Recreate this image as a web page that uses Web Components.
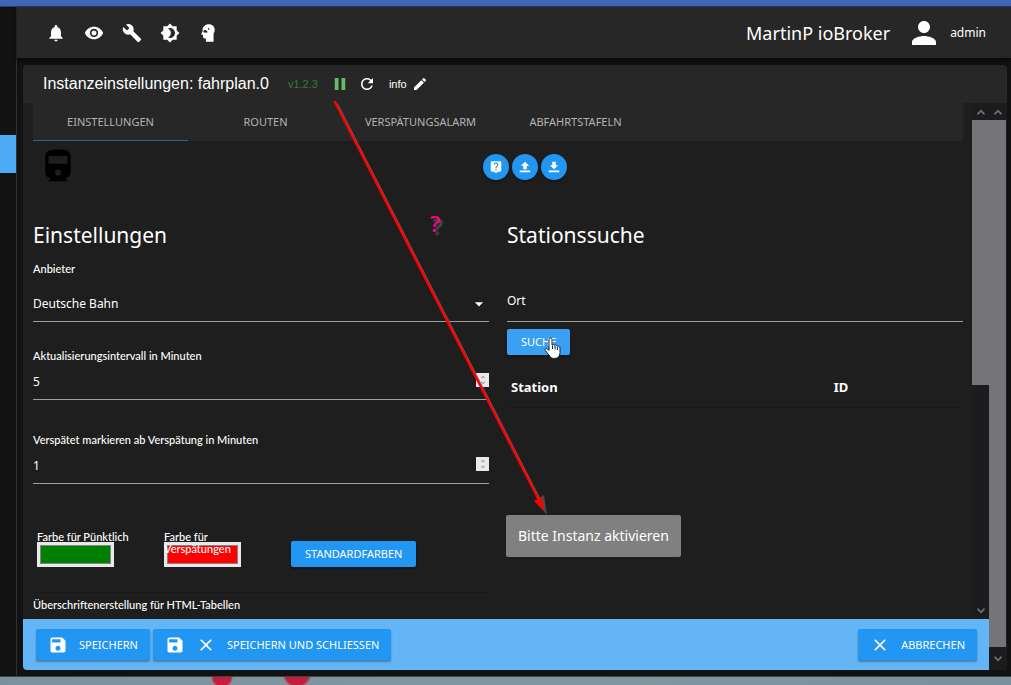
<!DOCTYPE html>
<html lang="de">
<head>
<meta charset="utf-8">
<title>ioBroker – Instanzeinstellungen</title>
<style>
  html, body { margin: 0; height: 100%; background: #121212; overflow: hidden; }
  body { font-family: "Noto Sans", "Open Sans", sans-serif; color: #fff; --narrow: Lato, "Noto Sans", sans-serif; }
</style>
</head>
<body>
<iob-app></iob-app>

<script>
const ICONS = {
  bell: '<path d="M12 22c1.1 0 2-.9 2-2h-4c0 1.1.89 2 2 2zm6-6v-5c0-3.07-1.64-5.64-4.5-6.32V4c0-.83-.67-1.5-1.5-1.5s-1.5.67-1.5 1.5v.68C7.63 5.36 6 7.92 6 11v5l-2 2v1h16v-1l-2-2z"/>',
  eye: '<path d="M12 4.5C7 4.5 2.73 7.61 1 12c1.73 4.39 6 7.5 11 7.5s9.27-3.11 11-7.5c-1.73-4.39-6-7.5-11-7.5zM12 17c-2.76 0-5-2.24-5-5s2.24-5 5-5 5 2.24 5 5-2.24 5-5 5zm0-8c-1.66 0-3 1.34-3 3s1.34 3 3 3 3-1.34 3-3-1.34-3-3-3z"/>',
  wrench: '<path d="M22.7 19l-9.1-9.1c.9-2.3.4-5-1.5-6.9-2-2-5-2.4-7.4-1.3L9 6 6 9 1.6 4.7C.4 7.1.9 10.1 2.9 12.1c1.9 1.9 4.6 2.4 6.9 1.5l9.1 9.1c.4.4 1 .4 1.4 0l2.3-2.3c.5-.4.5-1.1.1-1.4z"/>',
  theme: '<path d="M20 8.69V4h-4.69L12 .69 8.69 4H4v4.69L.69 12 4 15.31V20h4.69L12 23.31 15.31 20H20v-4.69L23.31 12 20 8.69zM12 18c-.89 0-1.74-.2-2.5-.55C11.56 16.5 13 14.42 13 12s-1.44-4.5-3.5-5.45C10.26 6.2 11.11 6 12 6c3.31 0 6 2.69 6 6s-2.69 6-6 6z"/>',
  head: '<path fill-rule="evenodd" d="M13 1.5c4.200 0 7 2.800 7 7 0 2-.6 3.200-1.300 4.500V22.500H9.500v-4H8c-1.100 0-2-.9-2-2v-2.500H4.500c-.5 0-.8-.5-.5-.9L5.500 10V8.500c0-4 3-7 7.500-7zM8 8.500l-1.500.8v1.600l1.500.9 1.500-.3 1.600.1.200-1.600-1.300-.6-.5-.9zM12.500 6l-.8.8.4 1.100 1.100.1.6-.9-.3-.9z"/>',
  pause: '<path d="M5 4h5v16H5zm9 0h5v16h-5z"/>',
  refresh: '<path d="M17.650 6.350C16.200 4.900 14.210 4 12 4c-4.420 0-7.990 3.580-7.990 8s3.570 8 7.990 8c3.730 0 6.840-2.550 7.730-6h-2.080c-.820 2.330-3.040 4-5.650 4-3.310 0-6-2.690-6-6s2.690-6 6-6c1.660 0 3.140.690 4.220 1.780L13 11h7V4l-2.350 2.350z"/>',
  pencil: '<path d="M3 17.250V21h3.750L17.810 9.940l-3.750-3.750L3 17.250zM20.710 7.040c.390-.390.390-1.020 0-1.410l-2.340-2.340c-.390-.390-1.020-.390-1.410 0l-1.830 1.830 3.750 3.750 1.830-1.830z"/>',
  person: '<path d="M12 12c2.210 0 4-1.790 4-4s-1.790-4-4-4-4 1.790-4 4 1.790 4 4 4zm0 2c-2.670 0-8 1.340-8 4v2h16v-2c0-2.660-5.330-4-8-4z"/>',
  train: '<path fill-rule="evenodd" d="M12 1C8 1 4 1.500 4 5v10.500C4 17.430 5.570 19 7.500 19L6 20.500v.5h12v-.5L16.500 19c1.930 0 3.500-1.570 3.500-3.500V5c0-3.500-3.580-4-8-4zM12 17.500c-1.100 0-2-.9-2-2s.9-2 2-2 2 .9 2 2-.9 2-2 2zM18 10H6V5h12z"/>',
  help: '<path d="M19 2H5c-1.110 0-2 .9-2 2v14c0 1.100.890 2 2 2h4l3 3 3-3h4c1.100 0 2-.9 2-2V4c0-1.100-.9-2-2-2zm-6 16h-2v-2h2v2zm2.070-7.750l-.9.920C13.450 11.900 13 12.500 13 14h-2v-.5c0-1.100.450-2.100 1.170-2.830l1.240-1.260c.370-.360.590-.860.590-1.410 0-1.100-.9-2-2-2s-2 .9-2 2H8c0-2.210 1.790-4 4-4s4 1.790 4 4c0 .880-.360 1.680-.930 2.250z"/>',
  upload: '<path d="M9 16h6v-6h4l-7-7-7 7h4zm-6 2h18v3H3z"/>',
  download: '<path d="M19 9h-4V3H9v6H5l7 7 7-7zM3 18v3h18v-3H3z"/>',
  save: '<path d="M17 3H5c-1.110 0-2 .9-2 2v14c0 1.100.890 2 2 2h14c1.100 0 2-.9 2-2V7l-4-4zm-5 16c-1.660 0-3-1.340-3-3s1.340-3 3-3 3 1.340 3 3-1.340 3-3 3zm3-10H5V5h10v4z"/>',
  close: '<path d="M19 6.410L17.590 5 12 10.590 6.410 5 5 6.410 10.590 12 5 17.590 6.410 19 12 13.410 17.590 19 19 17.590 13.410 12z"/>',
  caret: '<path d="M7 10l5 5 5-5z"/>',
  up: '<path d="M4 15l8-8 8 8-2 3-6-6-6 6z"/>',
  down: '<path d="M4 9l8 8 8-8-2-3-6 6-6-6z"/>'
};

/* Registers an element whose shadow root is cloned from a template. */
function define(name, html, setup) {
  const template = document.createElement('template');
  template.innerHTML = html;
  customElements.define(name, class extends HTMLElement {
    constructor() {
      super();
      this.attachShadow({ mode: 'open' }).append(template.content.cloneNode(true));
    }
    connectedCallback() {
      if (setup) setup(this, this.shadowRoot);
    }
  });
}

define('iob-icon', `
  <style>
    :host { display: inline-flex; flex: none; width: 20px; height: 20px; }
    svg { width: 100%; height: 100%; fill: currentColor; }
  </style>
  <svg viewBox="0 0 24 24" aria-hidden="true"></svg>`,
  (el, root) => { root.querySelector('svg').innerHTML = ICONS[el.getAttribute('name')] || ''; });

define('iob-icon-button', `
  <style>
    :host { display: inline-flex; }
    button { display: flex; align-items: center; justify-content: center; padding: 0; border: 0;
      width: var(--hit, 38px); height: var(--hit, 38px); background: none; color: inherit; }
    iob-icon { width: var(--glyph, 20px); height: var(--glyph, 20px); }
    :host([round]) button { width: 26px; height: 26px; border-radius: 50%; background: #2196f3;
      box-shadow: 0 2px 2px rgba(0,0,0,.3); }
    :host([round]) iob-icon { width: 14px; height: 14px; }
  </style>
  <button type="button"><iob-icon></iob-icon></button>`,
  (el, root) => {
    root.querySelector('iob-icon').setAttribute('name', el.getAttribute('icon'));
    root.querySelector('iob-icon').connectedCallback();
    root.querySelector('button').setAttribute('aria-label', el.getAttribute('label'));
  });

define('iob-button', `
  <style>
    :host { display: inline-flex; }
    button { display: flex; align-items: center; gap: 11px; height: 26px; padding: 0 14px; border: 0;
      border-radius: 2px; background: var(--fill, #2196f3); color: #fff; font: inherit; font-size: 11px;
      line-height: 16px; text-transform: uppercase; white-space: nowrap;
      box-shadow: 0 2px 2px rgba(0,0,0,.3); }
    :host([large]) button { height: 31px; padding: 0 12px; }
  </style>
  <button type="button"><slot name="icon"></slot><slot></slot></button>`);

define('iob-top-bar', `
  <style>
    :host { display: flex; align-items: center; justify-content: space-between; height: 51px;
      padding: 0 25px 0 20px; background: #272727; box-shadow: 0 2px 4px #080808; position: relative; }
    nav, .user { display: flex; align-items: center; }
    h1 { margin: 0 16px 0 0; font-size: 18px; font-weight: 400; line-height: 24px; }
    .user iob-icon { width: 36px; height: 36px; margin-right: 8px; }
    .user span { font-size: 12px; line-height: 20px; }
  </style>
  <nav>
    <iob-icon-button icon="bell" label="Benachrichtigungen"></iob-icon-button>
    <iob-icon-button icon="eye" label="Ansicht"></iob-icon-button>
    <iob-icon-button icon="wrench" label="Einstellungen"></iob-icon-button>
    <iob-icon-button icon="theme" label="Farbschema"></iob-icon-button>
    <iob-icon-button icon="head" label="Expertenmodus"></iob-icon-button>
  </nav>
  <div class="user"><h1>MartinP ioBroker</h1><iob-icon name="person"></iob-icon><span>admin</span></div>`);

define('iob-card-header', `
  <style>
    :host { display: flex; align-items: center; height: 38px; padding-left: 20px; background: #272727;
      border-radius: 4px 4px 0 0; font-family: "Liberation Sans", Arial, sans-serif; font-size: 11px;
      --hit: 27px; --glyph: 18px; }
    h2 { margin: 0 19px 0 0; font-size: 16px; font-weight: 400; line-height: 36px; }
    .version { margin-right: 9px; color: #2e7d32; }
    .run { color: #66bb6a; }
    .info { margin: 0 0 0 8px; }
    .edit { --glyph: 16px; }
  </style>
  <h2>Instanzeinstellungen: fahrplan.0</h2>
  <span class="version">v1.2.3</span>
  <iob-icon-button class="run" icon="pause" label="Anhalten"></iob-icon-button>
  <iob-icon-button icon="refresh" label="Neu starten"></iob-icon-button>
  <span class="info">info</span>
  <iob-icon-button class="edit" icon="pencil" label="Log-Level bearbeiten"></iob-icon-button>`);

define('iob-tabs', `
  <style>
    :host { display: grid; grid-template-columns: repeat(6, 1fr); height: 38px; background: #272727; }
    a { display: flex; align-items: center; justify-content: center; color: #b4b4b4;
      font-size: 11px;
      line-height: 16px; text-decoration: none; text-transform: uppercase; }
    a[aria-current] { box-shadow: inset 0 -1px #3b5d80; }
  </style>
  <a href="#einstellungen" aria-current="page">Einstellungen</a>
  <a href="#routen">Routen</a>
  <a href="#alarm">Verspätungsalarm</a>
  <a href="#tafeln">Abfahrtstafeln</a>`);

define('iob-scrollbar', `
  <style>
    :host { display: flex; flex-direction: column; flex: none; width: 17px; background: #1c1c1f; color: #707073; }
    .cap { display: flex; align-items: center; justify-content: center; height: var(--cap, 17px); }
    .cap:last-child { height: var(--end-cap, 17px); }
    iob-icon { width: 12px; height: 12px; }
    .track { flex: 1; }
    .thumb { height: var(--size, 100%); background: #757577; }
  </style>
  <div class="cap"><iob-icon name="up"></iob-icon></div>
  <div class="track"><div class="thumb"></div></div>
  <div class="cap"><iob-icon name="down"></iob-icon></div>`);

define('iob-instance-form', `
  <style>
    :host { display: flex; flex-direction: column; }
    h2 { margin: 0; font-size: 21px; font-weight: 400; line-height: 26px; }
    label, .more { font-family: var(--narrow); font-size: 11px; font-weight: 500; line-height: 16px; }
    .row { position: relative; display: flex; align-items: center; border-bottom: 1px solid #9e9e9e; }
    select, .row input { flex: 1; min-width: 0; height: 35px; padding: 0; border: 0; outline: 0;
      background: none; color: #fff; font: inherit; font-size: 12px; appearance: none; }
    .row input { appearance: textfield; }
    .row input::-webkit-inner-spin-button { appearance: none; margin: 0; }
    .first { margin-top: 13px; }
    .pick { margin-top: 9px; }
    .next { margin-top: 26px; }
    .last { margin-top: 32px; }
    .spin { display: flex; flex-direction: column; align-items: center; justify-content: center;
      width: 13px; height: 14px; margin-bottom: 3px; background: #e9e9ed; color: #8f8f9d; }
    .spin iob-icon { width: 8px; height: 6px; }
    .caret { position: absolute; right: 0; pointer-events: none; }
    .colors { display: grid; grid-template-columns: 127px 127px auto; justify-content: start;
      margin-top: 47px; padding: 0 4px 25px; border-bottom: 1px solid #191919; }
    .color { display: flex; flex-direction: column; width: 100px; }
    .color label { position: relative; z-index: 1; height: 11px; line-height: 12px; }
    .color input { box-sizing: border-box; width: 77px; height: 25px; padding: 0; border: 3px solid #e9e9ed;
      background: none; appearance: none; }
    .color input::-webkit-color-swatch-wrapper { padding: 0; }
    .color input::-webkit-color-swatch { border: 1px solid #848484; border-radius: 0; }
    .colors iob-button { align-self: end; }
    .more { margin: 4px 0 0; }
  </style>
  <h2>Einstellungen</h2>
  <label class="first" for="provider">Anbieter</label>
  <div class="row pick">
    <select id="provider"><option>Deutsche Bahn</option></select>
    <iob-icon class="caret" name="caret"></iob-icon>
  </div>
  <label class="next" for="interval">Aktualisierungsintervall in Minuten</label>
  <div class="row"><input id="interval" type="number" value="5">
    <span class="spin"><iob-icon name="up"></iob-icon><iob-icon name="down"></iob-icon></span></div>
  <label class="last" for="delay">Verspätet markieren ab Verspätung in Minuten</label>
  <div class="row"><input id="delay" type="number" value="1">
    <span class="spin"><iob-icon name="up"></iob-icon><iob-icon name="down"></iob-icon></span></div>
  <div class="colors">
    <div class="color"><label for="ontime">Farbe für Pünktlich</label><input id="ontime" type="color" value="#008000"></div>
    <div class="color"><label for="late">Farbe für Verspätungen</label><input id="late" type="color" value="#ff0000"></div>
    <iob-button>Standardfarben</iob-button>
  </div>
  <p class="more">Überschriftenerstellung für HTML-Tabellen</p>`);

define('iob-station-search', `
  <style>
    :host { display: flex; flex-direction: column; align-items: flex-start; }
    h2 { margin: 0; font-size: 21px; font-weight: 400; line-height: 26px; }
    input { box-sizing: border-box; width: 100%; height: 42px; margin: 32px 0 7px; padding: 0; border: 0;
      border-bottom: 1px solid #9e9e9e; outline: 0; background: none; color: #fff; font: inherit; font-size: 12px; }
    input::placeholder { color: #fff; opacity: 1; }
    .search { position: relative; display: inline-flex; --fill: #39a0f4; }
    .pointer { position: absolute; right: 8px; top: 8px; width: 18px; height: 23px; }
    table { width: 100%; margin-top: 12px; border-collapse: collapse; table-layout: fixed;
      border-bottom: 1px solid #191919; }
    th { padding: 0 4px; height: 40px; font-size: 13px; text-align: left; }
    th:first-child { width: 69%; }
  </style>
  <h2>Stationssuche</h2>
  <input type="text" placeholder="Ort" aria-label="Ort">
  <div class="search">
    <iob-button>Suche</iob-button>
    <svg class="pointer" viewBox="0 0 18 23" aria-hidden="true">
      <path d="M5 2.500C5 .5 8 .5 8 2.500V8c1-1 2.500-.6 2.700.4 1-.7 2.300-.2 2.500.8 1.200-.5 2.800.2 2.800 1.800v4.500c0 2-1 3.500-1.500 4.500-.8 1.500-6.500 2.300-8 0L1.300 13.500c-.8-1.500 1-2.800 2.200-1.500L5 13.500z" fill="#fff" stroke="#10213a"/>
      <path d="M8.500 8.500v3.500M11 9v3.500M13.400 10v3" stroke="#10213a" fill="none"/>
    </svg>
  </div>
  <table><thead><tr><th scope="col">Station</th><th scope="col">ID</th></tr></thead></table>`);

define('iob-settings', `
  <style>
    :host { display: flex; flex: 1; min-height: 0; background: #1e1e1e; }
    main { flex: 1; min-width: 0; padding: 0 9px 0 10px; overflow: hidden; }
    .head { display: grid; grid-template-columns: 1fr auto 1fr; align-items: center; height: 52px; }
    .head .logo { width: 40px; height: 38px; margin-left: 5px; color: #000; }
    .actions { display: flex; gap: 3px; padding-left: 54px; }
    .columns { display: grid; grid-template-columns: 1fr 1fr; gap: 18px; padding-top: 29px; }
    iob-scrollbar { --size: 55%; }
  </style>
  <main>
    <iob-tabs></iob-tabs>
    <div class="head">
      <iob-icon class="logo" name="train"></iob-icon>
      <div class="actions">
        <iob-icon-button round icon="help" label="Hilfe"></iob-icon-button>
        <iob-icon-button round icon="upload" label="Hochladen"></iob-icon-button>
        <iob-icon-button round icon="download" label="Herunterladen"></iob-icon-button>
      </div>
    </div>
    <div class="columns">
      <iob-instance-form></iob-instance-form>
      <iob-station-search></iob-station-search>
    </div>
  </main>
  <iob-scrollbar></iob-scrollbar>`);

define('iob-action-bar', `
  <style>
    :host { display: flex; align-items: center; gap: 3px; height: 51px; padding: 0 12px 0 13px;
      background: #64b5f6; border-radius: 0 0 0 4px; }
    .cancel { margin-left: auto; }
  </style>
  <iob-button large><iob-icon slot="icon" name="save"></iob-icon>Speichern</iob-button>
  <iob-button large><iob-icon slot="icon" name="save"></iob-icon><iob-icon slot="icon" name="close"></iob-icon>Speichern und Schliessen</iob-button>
  <iob-button large class="cancel"><iob-icon slot="icon" name="close"></iob-icon>Abbrechen</iob-button>`);

/* Red pointer arrow, question mark and the hint it leads to, drawn over the page. */
define('iob-annotation', `
  <style>
    :host { position: absolute; inset: 0; pointer-events: none; }
    svg { position: absolute; left: 325px; top: 95px; width: 230px; height: 430px; }
    .mark { position: absolute; left: 430px; top: 207px; font: 600 22px/32px "Open Sans", sans-serif;
      color: #ff0080; text-shadow: 3px 3px 2px #555; }
    .hint { position: absolute; left: 506px; top: 515px; padding: 0 12px; border-radius: 2px;
      background: #808080; font-size: 14px; line-height: 42px; }
  </style>
  <svg viewBox="0 0 230 430" aria-hidden="true">
    <g transform="translate(2 1)" stroke="#777" fill="#555" opacity=".8">
      <path d="M10 8L215 408" stroke-width="2"/><path d="M220 419l-12-14 9-6z" stroke="none"/>
    </g>
    <path d="M10 7L215 407" stroke="#f00" stroke-width="2.500" stroke-linecap="round"/>
    <path d="M219 416l-10-10 8-4z" fill="#f00"/>
  </svg>
  <span class="mark">?</span>
  <div class="hint" role="status">Bitte Instanz aktivieren</div>`);

define('iob-app', `
  <style>
    :host { position: relative; display: flex; flex-direction: column; height: 100vh; }
    .window { flex: none; height: 6px; background: #3f66b6; border-bottom: 1px solid #243e79; }
    .shell { display: flex; flex: 1; min-height: 0; border-bottom: 1px solid #3d4448; }
    .rail { flex: none; width: 16px; border-right: 1px solid #303030; }
    .current { height: 38px; margin-top: 128px; background: #4dabf5; }
    .page { display: flex; flex: 1; min-width: 0; flex-direction: column; }
    .work { display: flex; flex: 1; min-height: 0; padding: 7px 4px 6px 6px; }
    .card { display: flex; flex: 1; min-width: 0; flex-direction: column; background: #1e1e1e; border-radius: 4px; }
    .body { display: flex; flex: 1; min-height: 0; padding-right: 1px; }
    .frame { display: flex; flex: 1; min-width: 0; flex-direction: column; }
    .body > iob-scrollbar { --end-cap: 23px; }
    .desktop { flex: none; height: 8px; background:
      radial-gradient(circle 11px at 222px 0, #c41e3e 80%, transparent),
      radial-gradient(circle 15px at 297px -4px, #c41e3e 80%, transparent),
      linear-gradient(90deg, #7b929d, #81979f 50%, #7a919d); }
  </style>
  <div class="window"></div>
  <div class="shell">
    <div class="rail"><div class="current"></div></div>
    <div class="page">
      <iob-top-bar></iob-top-bar>
      <div class="work">
        <div class="card">
          <iob-card-header></iob-card-header>
          <div class="body">
            <div class="frame">
              <iob-settings></iob-settings>
              <iob-action-bar></iob-action-bar>
            </div>
            <iob-scrollbar></iob-scrollbar>
          </div>
        </div>
      </div>
    </div>
  </div>
  <div class="desktop"></div>
  <iob-annotation></iob-annotation>`);
</script>
</body>
</html>
